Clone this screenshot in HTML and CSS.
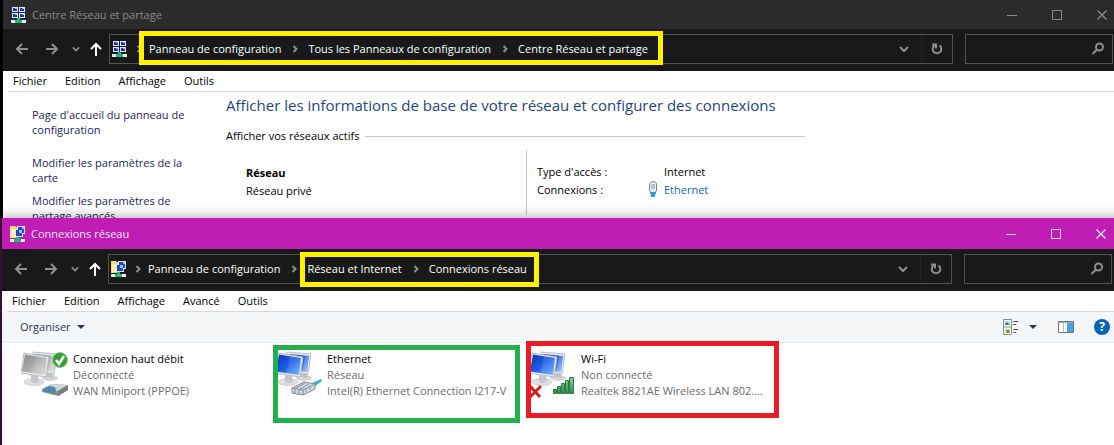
FILE: index.html
```
<!DOCTYPE html>
<html lang="fr">

<head>
    <meta charset="UTF-8" />
    <meta name="viewport" content="width=device-width, initial-scale=1" />
    <title>Connexions réseau</title>
    <link rel="stylesheet" href="styles.css">
</head>

<body>
    <!-- Formes partagées -->
    <svg class="sprite" aria-hidden="true">
        <defs>
            <linearGradient id="blueScreen" x1="0" y1="0" x2="1" y2="1">
                <stop offset="0" stop-color="#0a37b4" />
                <stop offset="0.5" stop-color="#1c5ce6" />
                <stop offset="1" stop-color="#6fb0ff" />
            </linearGradient>
            <linearGradient id="greyScreen" x1="0" y1="0" x2="1" y2="1">
                <stop offset="0" stop-color="#868686" />
                <stop offset="0.5" stop-color="#acacac" />
                <stop offset="1" stop-color="#dcdcdc" />
            </linearGradient>
            <linearGradient id="bars" x1="0" y1="0" x2="0" y2="1">
                <stop offset="0" stop-color="#8fd09b" />
                <stop offset="1" stop-color="#2f8f4c" />
            </linearGradient>
        </defs>
        <symbol id="back" viewBox="0 0 14 14">
            <path d="M13 7H2M7 2 2 7l5 5" />
        </symbol>
        <symbol id="forward" viewBox="0 0 14 14">
            <path d="M1 7h11M7 2l5 5-5 5" />
        </symbol>
        <symbol id="up" viewBox="0 0 14 14">
            <path d="M7 14V2M2 7l5-5 5 5" />
        </symbol>
        <symbol id="down" viewBox="0 0 10 10">
            <path d="m1 3 4 4 4-4" />
        </symbol>
        <symbol id="sep" viewBox="0 0 10 10">
            <path d="m4 2 3 3-3 3" />
        </symbol>
        <symbol id="refresh" viewBox="0 0 14 14">
            <path d="M9.500 3.500A4.300 4.300 0 1 1 4.500 3.500M2 2.500h4v4" />
        </symbol>
        <symbol id="search" viewBox="0 0 14 14">
            <circle cx="8.500" cy="5" r="3.500" />
            <path d="M6 7.500 1.500 12" />
        </symbol>
        <symbol id="minimize" viewBox="0 0 12 12">
            <path d="M1 6.500h10" />
        </symbol>
        <symbol id="maximize" viewBox="0 0 12 12">
            <path d="M1.500 1.500h9v9h-9z" />
        </symbol>
        <symbol id="close" viewBox="0 0 12 12">
            <path d="m1.500 1.500 9 9M10.500 1.500l-9 9" stroke-width="1.400" />
        </symbol>
        <symbol id="center" viewBox="0 0 16 16">
            <path fill="#dfe6f5" d="M1 0h6v5H1zM8 0h6v5H8zM1 6h6v5H1zM8 6h6v5H8z" />
            <path fill="#1c2fc4" d="M2 1h4v3H2zM9 1h4v3H9zM2 7h4v3H2zM9 7h4v3H9z" />
            <path fill="#8fb0ff" d="M4 1h2v1H4zM11 1h2v1h-2zM4 7h2v1H4zM11 7h2v1h-2z" />
            <path fill="#e8eef0" d="M0 13h15v3H0z" />
            <path fill="#1fb978" d="M6 11h3v2h2v3H4v-3h2z" />
        </symbol>
        <symbol id="folder" viewBox="0 0 16 16">
            <path fill="#f3d978" d="M0 0h5l1 1h3v11H0z" />
            <path fill="#fff0ae" d="M1 3h5v8H1z" />
            <path fill="#d9e4f8" d="M7 0h8v8H7zM5 3h8v8H5z" />
            <path fill="#2743c9" d="M8 1h6v6H8zM6 4h6v6H6z" />
            <path fill="#9dc2ff" d="M9 4h3v3H9zM12 1h2v2h-2z" />
            <path fill="#e8eef0" d="M0 13h15v3H0z" />
            <path fill="#1fb978" d="M6 11h3v2h2v3H4v-3h2z" />
        </symbol>
        <symbol id="computers" viewBox="0 0 48 48">
            <ellipse cx="29" cy="28" rx="8" ry="3" fill="#d4d6d9" />
            <path d="m26 21 6 1 1 6-7-1z" fill="#bfc3c8" />
            <path d="m12 2 24 2-3 20-22-3z" fill="#e6e8eb" stroke="#bcc0c6" />
            <path class="screen" d="m14 4 20 2-2 16-19-3z" />
            <path d="m30 5.500 4 .5-2 16-4-1z" fill="#fff" opacity=".25" />
            <ellipse cx="13" cy="32" rx="10" ry="3.500" fill="#dcdee1" stroke="#bfc2c7" stroke-width=".6" />
            <path d="m10 25 7 1 1 6q-4 2-8 0z" fill="#c3c6cb" />
            <path d="m3 3 25 4-3 20-25-4z" fill="#eceef0" stroke="#b6bac0" />
            <path class="screen" d="m4 4.500 22 3.500-2 17-23-3.500z" />
            <path d="m15 6.300 11 1.700-2 17-13-2z" fill="#fff" opacity=".12" />
        </symbol>
    </svg>

    <!-- Centre Réseau et partage -->
    <section class="window window-center">
        <header class="titlebar">
            <svg class="app-icon"><use href="#center" /></svg>
            <h1>Centre Réseau et partage</h1>
            <button aria-label="Réduire"><svg><use href="#minimize" /></svg></button>
            <button aria-label="Agrandir"><svg><use href="#maximize" /></svg></button>
            <button aria-label="Fermer"><svg><use href="#close" /></svg></button>
        </header>
        <div class="navbar">
            <button class="arrow" aria-label="Précédent"><svg><use href="#back" /></svg></button>
            <button class="arrow" aria-label="Suivant"><svg><use href="#forward" /></svg></button>
            <button class="recent" aria-label="Emplacements récents"><svg><use href="#down" /></svg></button>
            <button class="up" aria-label="Monter"><svg><use href="#up" /></svg></button>
            <nav class="address">
                <svg class="app-icon"><use href="#center" /></svg>
                <svg class="sep"><use href="#sep" /></svg>
                <span class="crumbs marked">
                    <a href="#">Panneau de configuration</a>
                    <svg class="sep"><use href="#sep" /></svg>
                    <a href="#">Tous les Panneaux de configuration</a>
                    <svg class="sep"><use href="#sep" /></svg>
                    <a href="#">Centre Réseau et partage</a>
                </span>
                <button class="history" aria-label="Adresses précédentes"><svg><use href="#down" /></svg></button>
                <button class="refresh" aria-label="Actualiser"><svg><use href="#refresh" /></svg></button>
            </nav>
            <label class="search">
                <input type="search" aria-label="Rechercher">
                <svg><use href="#search" /></svg>
            </label>
        </div>
        <div class="menubar">
            <button>Fichier</button>
            <button>Edition</button>
            <button>Affichage</button>
            <button>Outils</button>
        </div>
        <div class="center">
            <aside class="tasks">
                <a class="home" href="#">Page d'accueil du panneau de configuration</a>
                <a href="#">Modifier les paramètres de la carte</a>
                <a href="#">Modifier les paramètres de partage avancés</a>
            </aside>
            <main class="status">
                <h2>Afficher les informations de base de votre réseau et configurer des connexions</h2>
                <h3>Afficher vos réseaux actifs</h3>
                <div class="network">
                    <div class="network-name">
                        <strong>Réseau</strong>
                        <span>Réseau privé</span>
                    </div>
                    <dl class="network-info">
                        <dt>Type d'accès :</dt>
                        <dd>Internet</dd>
                        <dt>Connexions :</dt>
                        <dd class="with-plug">
                            <svg class="plug" viewBox="0 0 10 16">
                                <path d="M1.500 2.500 3 .8h4l1.500 1.700V10l-2 1.500h-3L1.500 10z" fill="#e9edf2" stroke="#7c8794" />
                                <path d="M4 3v5M6 3v5" stroke="#8a96a5" />
                                <path d="M2 11h6v2H7v3H3v-3H2z" fill="#2f9fc4" />
                            </svg>
                            <a href="#">Ethernet</a>
                        </dd>
                    </dl>
                </div>
            </main>
        </div>
    </section>

    <!-- Connexions réseau -->
    <section class="window window-connections">
        <header class="titlebar">
            <svg class="app-icon"><use href="#folder" /></svg>
            <h1>Connexions réseau</h1>
            <button aria-label="Réduire"><svg><use href="#minimize" /></svg></button>
            <button aria-label="Agrandir"><svg><use href="#maximize" /></svg></button>
            <button aria-label="Fermer"><svg><use href="#close" /></svg></button>
        </header>
        <div class="navbar">
            <button class="arrow" aria-label="Précédent"><svg><use href="#back" /></svg></button>
            <button class="arrow" aria-label="Suivant"><svg><use href="#forward" /></svg></button>
            <button class="recent" aria-label="Emplacements récents"><svg><use href="#down" /></svg></button>
            <button class="up" aria-label="Monter"><svg><use href="#up" /></svg></button>
            <nav class="address">
                <svg class="app-icon"><use href="#folder" /></svg>
                <svg class="sep"><use href="#sep" /></svg>
                <a href="#">Panneau de configuration</a>
                <svg class="sep"><use href="#sep" /></svg>
                <span class="crumbs marked">
                    <a href="#">Réseau et Internet</a>
                    <svg class="sep"><use href="#sep" /></svg>
                    <a href="#">Connexions réseau</a>
                </span>
                <button class="history" aria-label="Adresses précédentes"><svg><use href="#down" /></svg></button>
                <button class="refresh" aria-label="Actualiser"><svg><use href="#refresh" /></svg></button>
            </nav>
            <label class="search">
                <input type="search" aria-label="Rechercher">
                <svg><use href="#search" /></svg>
            </label>
        </div>
        <div class="menubar">
            <button>Fichier</button>
            <button>Edition</button>
            <button>Affichage</button>
            <button>Avancé</button>
            <button>Outils</button>
        </div>
        <div class="toolbar">
            <button class="organize">Organiser
                <svg class="caret" viewBox="0 0 8 4"><path d="M0 0h8L4 4z" /></svg>
            </button>
            <button class="view" aria-label="Affichage">
                <svg viewBox="0 0 16 16">
                    <path d="M.5.500h8v15h-8zM.5 8h8" fill="#fff" stroke="#8d8d8d" />
                    <path d="M2 2h5v4H2z" fill="#bfe3f7" />
                    <path d="M2 4.500 4 3l3 3H2z" fill="#3a7d9c" />
                    <path d="M2 10h5v4H2z" fill="#d9e39a" />
                    <path d="m3 11 3 0 1 3H4z" fill="#6c8f3c" />
                    <path d="M10 2.500h5M10 5.500h3M10 10.500h5M10 13.500h3" stroke="#5a5a5a" />
                </svg>
                <svg class="caret" viewBox="0 0 8 4"><path d="M0 0h8L4 4z" /></svg>
            </button>
            <button class="pane" aria-label="Volet de visualisation">
                <svg viewBox="0 0 16 12">
                    <path d="M.5.500h15v11H.500z" fill="#fff" stroke="#6f7478" />
                    <path d="M1 1h14v1H1z" fill="#a9adb1" />
                    <path d="M5.500 2v9" stroke="#b4b8bc" />
                    <path d="M9 2h6v9H9z" fill="#4aa3e8" />
                </svg>
            </button>
            <button class="help" aria-label="Aide">?</button>
        </div>
        <ul class="connections">
            <li class="connection off">
                <svg class="device" viewBox="0 0 48 48">
                    <use href="#computers" />
                    <path d="m21 39 9-5 17 1v5l-10 6-16-4z" fill="#8d9297" />
                    <path d="m21 39 9-5 17 1-10 6z" fill="#d3d6da" />
                    <path d="m22 39 6-3q6 0 7 3l-1 5-12-3z" fill="#4c88aa" />
                    <path d="m37 41 10-6v5l-10 6z" fill="#777d83" />
                    <circle cx="39" cy="10" r="7.500" fill="#2fa52f" stroke="#a9b8a9" />
                    <path d="m35 10 3 4 5-8" fill="none" stroke="#fff" stroke-width="2.500" />
                </svg>
                <div class="label">
                    <strong>Connexion haut débit</strong>
                    <span>Déconnecté</span>
                    <span>WAN Miniport (PPPOE)</span>
                </div>
            </li>
            <li class="connection ethernet">
                <svg class="device" viewBox="0 0 48 48">
                    <use href="#computers" />
                    <path d="m37 33 9-4 1 2-8 6z" fill="#35b3e0" />
                    <path d="m17 38 12-6 11 2v5l-12 6-11-2z" fill="#d3dae3" stroke="#7e8894" />
                    <path d="m17 38 11 2 12-6M28 40v5" fill="none" stroke="#7e8894" />
                    <path d="m21 38 9-5M25 39l9-5M20 39v4M24 40v4M31 39v3M35 37v3" stroke="#8490a0" />
                </svg>
                <div class="label">
                    <strong>Ethernet</strong>
                    <span>Réseau</span>
                    <span>Intel(R) Ethernet Connection I217-V</span>
                </div>
            </li>
            <li class="connection wifi">
                <svg class="device" viewBox="0 0 48 48">
                    <use href="#computers" />
                    <path d="M24.500 39.500h3v4h-3zM28.500 36.500h3v7h-3zM32.500 33.500h3v10h-3zM36.500 30.500h3v13h-3zM40.500 27.500h4v16h-4z" fill="url(#bars)" stroke="#2c7d45" />
                    <path d="m1 36 10 11M12 36 1 47" stroke="#d3202a" stroke-width="3" />
                </svg>
                <div class="label">
                    <strong>Wi-Fi</strong>
                    <span>Non connecté</span>
                    <span>Realtek 8821AE Wireless LAN 802....</span>
                </div>
            </li>
        </ul>
    </section>
</body>

</html>
```
FILE: styles.css
```
* {
    box-sizing: border-box;
}

body {
    position: relative;
    min-height: 100vh;
    margin: 0;
    overflow: hidden;
    background: #000;
    color: #000;
    font: 11px/16px "Open Sans", sans-serif;
}

button {
    padding: 0;
    border: 0;
    background: none;
    color: inherit;
    font: inherit;
}

a {
    color: inherit;
    text-decoration: none;
}

h1,
h2,
h3,
ul,
dl,
dd {
    margin: 0;
    padding: 0;
    font-weight: normal;
}

svg {
    flex-shrink: 0;
}

.sprite {
    position: absolute;
    width: 0;
    height: 0;
}

/* windows */
.window {
    position: absolute;
    bottom: 0;
    display: flex;
    flex-direction: column;
    background: #fff;
}

.window-center {
    top: 0;
    right: -10px;
    left: 3px;
}

.window-connections {
    top: 218px;
    right: -9px;
    left: 0;
    border-left: 2px solid #3a0d38;
    box-shadow: 0 0 12px rgba(0, 0, 0, 0.4);
}

.app-icon {
    width: 16px;
    height: 16px;
}

.titlebar {
    display: flex;
    align-items: center;
    height: 29px;
    padding-left: 8px;
    background: #2b2b2b;
    color: #8b8b8b;
}

.titlebar h1 {
    flex: 1;
    padding-left: 5px;
    font-size: 11px;
}

.titlebar button {
    display: flex;
    align-items: center;
    justify-content: center;
    width: 45px;
    height: 100%;
}

.titlebar button svg {
    width: 12px;
    height: 12px;
    fill: none;
    stroke: currentColor;
}

.window-connections .titlebar {
    height: 31px;
    background: #bf1db3;
    color: #f9e6f8;
}

/* address bar */
.navbar {
    display: flex;
    align-items: center;
    height: 42px;
    padding: 0 11px 2px 4px;
    background: #191919;
    color: #fff;
}

.navbar button {
    display: flex;
    align-items: center;
    justify-content: center;
    height: 28px;
}

.navbar svg:not(.app-icon) {
    fill: none;
    stroke: #8f8f8f;
    stroke-width: 2;
}

.arrow {
    width: 30px;
}

.recent {
    width: 17px;
}

.up {
    width: 24px;
    margin-right: 1px;
}

.arrow svg,
.up svg,
.refresh svg,
.search svg {
    width: 14px;
    height: 14px;
}

.navbar .up svg {
    stroke: #fff;
}

.recent svg,
.history svg {
    width: 10px;
    height: 10px;
}

.recent svg {
    width: 8px;
}

.address {
    display: flex;
    flex: 1;
    align-items: center;
    height: 30px;
    margin-right: 12px;
    padding-left: 2px;
    border: 1px solid #535353;
}

.crumbs {
    display: flex;
    align-items: center;
}

.address .sep {
    width: 27px;
    height: 10px;
}

.address .app-icon + .sep {
    width: 21px;
}

/* highlighted part of the path */
.marked {
    position: relative;
}

.marked::after {
    content: "";
    position: absolute;
    inset: -10px -15px -8px -10px;
    border: 5px solid #fff200;
    pointer-events: none;
}

.window-connections .marked::after {
    inset: -9px -12px -10px -7px;
}

.history {
    width: 34px;
    margin-left: auto;
}

.refresh {
    width: 31px;
    border-left: 1px solid #222;
}

.search {
    display: flex;
    align-items: center;
    width: 148px;
    height: 30px;
    padding-right: 7px;
    border: 1px solid #535353;
}

.search input {
    flex: 1;
    min-width: 0;
    height: 100%;
    border: 0;
    outline: 0;
    background: none;
    color: #fff;
    font: inherit;
}

.menubar {
    display: flex;
    align-items: center;
    gap: 18px;
    height: 21px;
    margin-left: 5px;
    padding-left: 5px;
    border-bottom: 1px solid #d9d9d9;
}

/* network center */
.center {
    display: flex;
    flex: 1;
    min-height: 0;
}

.tasks {
    display: flex;
    flex-direction: column;
    gap: 8px;
    width: 223px;
    padding: 15px 29px 0;
    color: #1b2569;
    line-height: 15px;
}

.tasks .home {
    margin-bottom: 10px;
}

.status {
    width: 579px;
    padding-top: 2px;
}

.status h2 {
    color: #1c4587;
    font-size: 15px;
    line-height: 22px;
    white-space: nowrap;
}

.status h3 {
    display: flex;
    align-items: center;
    gap: 6px;
    margin: 12px 0 6px;
    font-size: 11px;
}

.status h3::after {
    content: "";
    flex: 1;
    border-top: 1px solid #c8c8c8;
}

.network {
    display: flex;
    line-height: 18px;
}

.network-name {
    display: flex;
    flex-direction: column;
    width: 300px;
    padding: 14px 20px;
}

.network-info {
    display: grid;
    flex: 1;
    grid-template-columns: 111px 1fr;
    align-content: start;
    padding: 13px 0 16px 10px;
    border-left: 1px solid #c8c8c8;
}

.network-info dd {
    padding-left: 16px;
}

.network-info .with-plug {
    display: flex;
    gap: 6px;
    padding-left: 0;
    color: #1468b0;
}

.plug {
    width: 10px;
    height: 16px;
}

/* network connections */
.toolbar {
    display: flex;
    align-items: center;
    height: 31px;
    padding: 0 13px 0 18px;
    border-bottom: 1px solid #eceef1;
    background: #f4f6f8;
    color: #1e395b;
}

.toolbar button {
    display: flex;
    align-items: center;
}

.caret {
    width: 8px;
    height: 4px;
    fill: #1e395b;
}

.organize {
    gap: 6px;
}

.view {
    gap: 10px;
    margin-left: auto;
    margin-right: 21px;
}

.view svg:first-child {
    width: 16px;
    height: 16px;
}

.pane {
    margin-right: 20px;
}

.pane svg {
    width: 16px;
    height: 12px;
}

.toolbar .help {
    justify-content: center;
    width: 16px;
    height: 16px;
    border-radius: 50%;
    background: #0a63b8;
    color: #fff;
    font-size: 12px;
    font-weight: bold;
}

.connections {
    display: grid;
    grid-template-columns: repeat(auto-fill, 254px);
    padding: 6px 0 0 19px;
    list-style: none;
}

.connection {
    --screen: url(#blueScreen);
    position: relative;
    display: flex;
    gap: 4px;
}

.off {
    --screen: url(#greyScreen);
}

.device {
    width: 48px;
    height: 50px;
}

.screen {
    fill: var(--screen);
}

.label {
    display: flex;
    flex-direction: column;
    padding-top: 2px;
    color: #6d6d6d;
    white-space: nowrap;
}

.label strong {
    color: #000;
    font-weight: normal;
}

/* framed connections */
.ethernet::after,
.wifi::after {
    content: "";
    position: absolute;
    inset: -4px 9px -24px -2px;
    border: 5px solid #22b14c;
}

.wifi::after {
    inset: -8px 4px -19px -3px;
    border-color: #ed1c24;
}
```
